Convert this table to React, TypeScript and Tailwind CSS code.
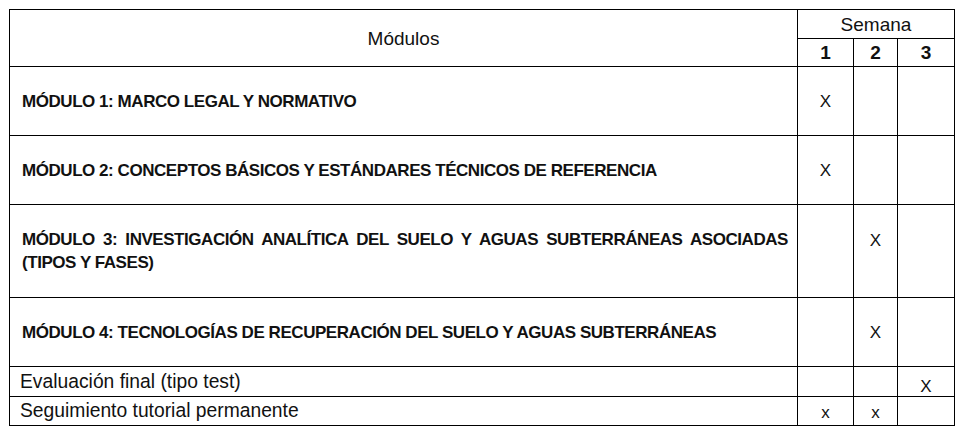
import React from "react";

type Row = {
  label: string;
  bold?: boolean;
  justify?: boolean;
  marks: [string, string, string];
  rowClass: string;
  markClass?: string;
};

const rows: Row[] = [
  { label: "MÓDULO 1: MARCO LEGAL Y NORMATIVO", bold: true, marks: ["X", "", ""], rowClass: "h-[69px]" },
  {
    label: "MÓDULO 2: CONCEPTOS BÁSICOS Y ESTÁNDARES TÉCNICOS DE REFERENCIA",
    bold: true,
    marks: ["X", "", ""],
    rowClass: "h-[69px]",
  },
  {
    label:
      "MÓDULO 3: INVESTIGACIÓN ANALÍTICA DEL SUELO Y AGUAS SUBTERRÁNEAS ASOCIADAS (TIPOS Y FASES)",
    bold: true,
    justify: true,
    marks: ["", "X", ""],
    rowClass: "h-[93px]",
    markClass: "align-top pt-[27px]",
  },
  {
    label: "MÓDULO 4: TECNOLOGÍAS DE RECUPERACIÓN DEL SUELO Y AGUAS SUBTERRÁNEAS",
    bold: true,
    marks: ["", "X", ""],
    rowClass: "h-[69px]",
  },
  { label: "Evaluación final (tipo test)", marks: ["", "", "X"], rowClass: "h-[30px]", markClass: "pt-[9px]" },
  { label: "Seguimiento tutorial permanente", marks: ["x", "x", ""], rowClass: "h-[29px]", markClass: "text-[15px] pt-[3px]" },
];

export default function App() {
  return (
    <div className="bg-white w-[964px] h-[435px] pt-[9px] pl-[9px] font-['Liberation_Sans',Arial,sans-serif] text-[#111]">
      <table className="table-fixed border-collapse w-[945px]">
        <colgroup>
          <col className="w-[788px]" />
          <col className="w-[56px]" />
          <col className="w-[44px]" />
          <col className="w-[57px]" />
        </colgroup>
        <thead>
          <tr className="h-[29px]">
            <th rowSpan={2} className="border border-black font-normal text-[19px] text-center align-middle pt-[2px]">
              Módulos
            </th>
            <th colSpan={3} className="border border-black font-normal text-[19px] leading-none text-center">
              Semana
            </th>
          </tr>
          <tr className="h-[28px]">
            <th className="border border-black font-bold text-[19px] leading-none">1</th>
            <th className="border border-black font-bold text-[19px] leading-none">2</th>
            <th className="border border-black font-bold text-[19px] leading-none">3</th>
          </tr>
        </thead>
        <tbody>
          {rows.map((r) => (
            <tr key={r.label} className={r.rowClass}>
              <td
                className={
                  r.bold
                    ? "border border-black pl-[12px] pr-[9px] font-bold text-[17px] tracking-[-0.45px] leading-[23px] " +
                      (r.justify ? "text-justify" : "text-left")
                    : "border border-black pl-[10px] text-[19.3px] leading-[22px]"
                }
              >
                {r.label}
              </td>
              {r.marks.map((m, i) => (
                <td
                  key={i}
                  className={
                    "border border-black text-center text-[17px] leading-none " + (r.markClass ?? "")
                  }
                >
                  {m}
                </td>
              ))}
            </tr>
          ))}
        </tbody>
      </table>
    </div>
  );
}
